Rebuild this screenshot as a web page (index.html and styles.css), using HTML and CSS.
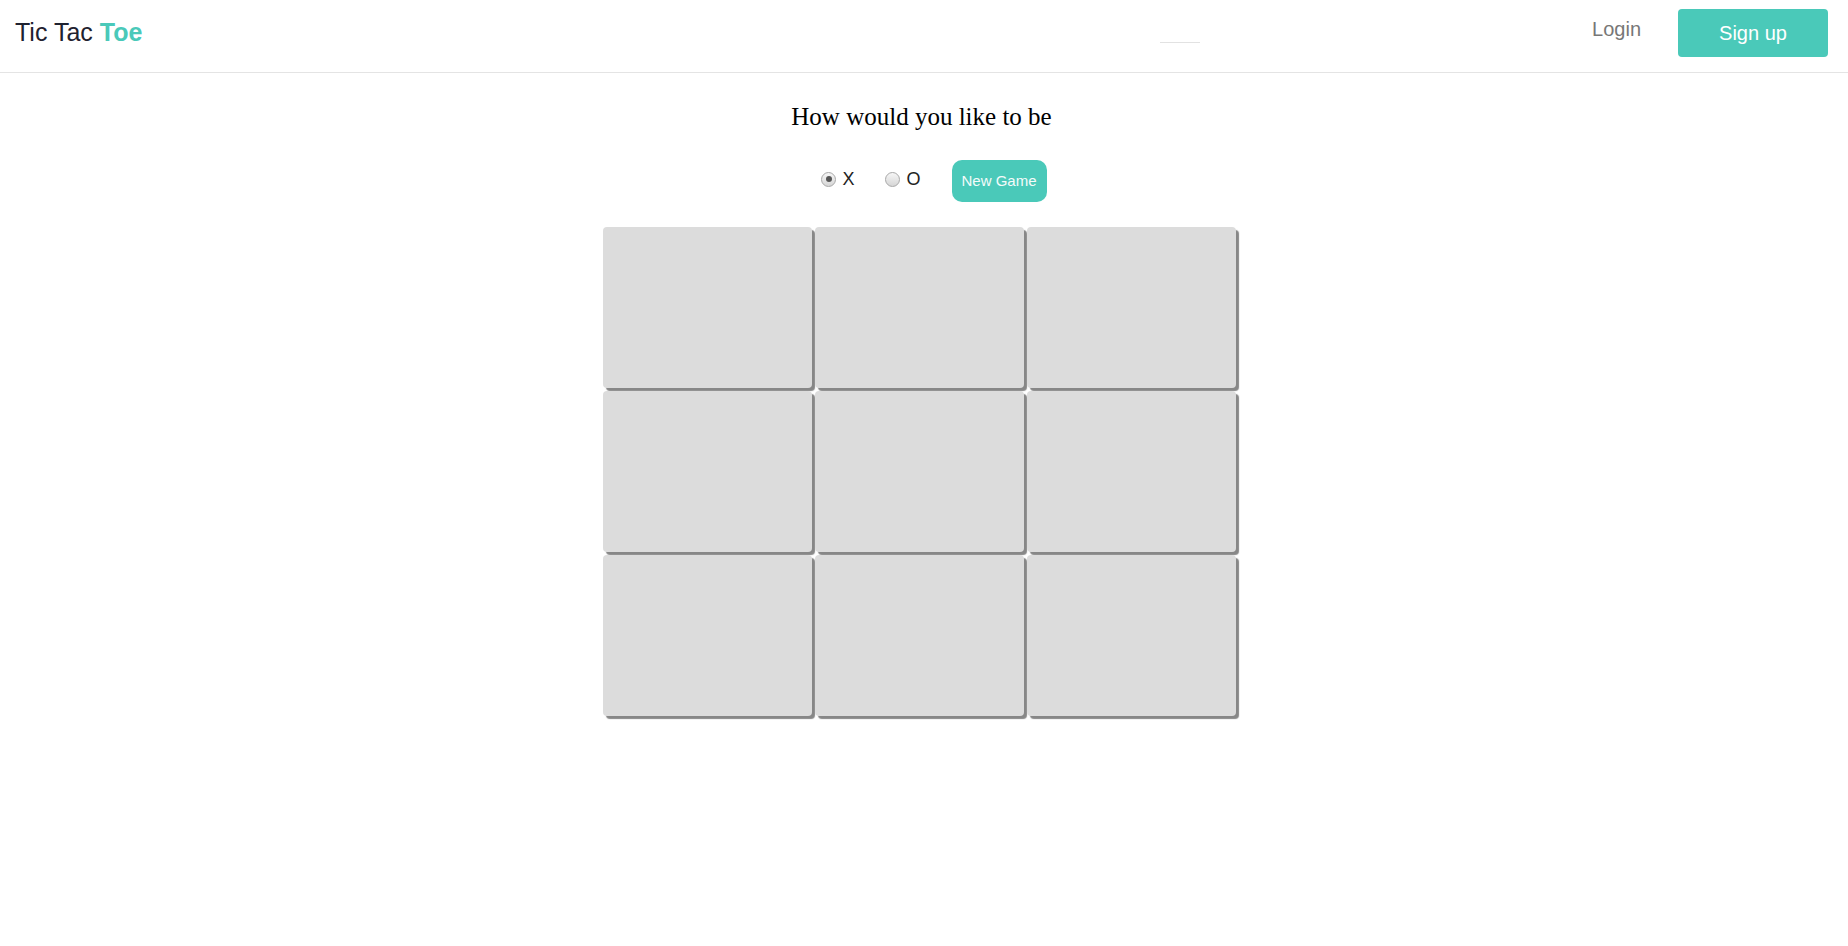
FILE: index.html
```html
<!DOCTYPE html>
<html lang="en">
<head>
<meta charset="utf-8">
<title>Tic Tac Toe</title>
<link rel="stylesheet" href="styles.css">
</head>
<body>
<header class="topbar">
  <div class="logo">Tic Tac <b class="logo-accent">Toe</b></div>
  <div class="nav-mid"><span class="nav-line"></span></div>
  <nav class="auth">
    <a class="login" href="#">Login</a>
    <a class="signup" href="#">Sign up</a>
  </nav>
</header>
<main class="game">
  <h2 class="prompt">How would you like to be</h2>
  <div class="controls">
    <label class="choice"><input class="radio" type="radio" name="side" checked><span>X</span></label>
    <label class="choice"><input class="radio" type="radio" name="side"><span>O</span></label>
    <button class="new-game" type="button">New Game</button>
  </div>
  <div class="board-wrap">
    <div class="board">
      <div class="cell"></div><div class="cell"></div><div class="cell"></div>
      <div class="cell"></div><div class="cell"></div><div class="cell"></div>
      <div class="cell"></div><div class="cell"></div><div class="cell"></div>
    </div>
  </div>
</main>
</body>
</html>
```
FILE: styles.css
```css
* { box-sizing: border-box; }
html, body { margin: 0; padding: 0; background: #fff; }
body { font-family: "Liberation Sans", Arial, sans-serif; color: #222; }

.topbar {
  height: 73px;
  border-bottom: 1px solid #e4e4e4;
  display: flex;
  align-items: center;
  padding: 0 20px 0 15px;
}
.logo {
  font-size: 25px;
  color: #1f2230;
  flex: 1 1 0;
  margin-top: -8px;
}
.logo-accent { color: #4ac9b9; font-weight: bold; }

.nav-mid { flex: 0 0 auto; display: flex; margin-left: 516px; }
.nav-line {
  display: block;
  width: 40px;
  height: 1px;
  background: #e2e2e2;
  margin-top: 12px;
}

.auth {
  flex: 1 1 0;
  display: flex;
  justify-content: flex-end;
  align-items: center;
}
.login {
  font-size: 20px;
  color: #777;
  text-decoration: none;
  margin-right: 37px;
  margin-top: -14px;
}
.signup {
  display: flex;
  align-items: center;
  justify-content: center;
  width: 150px;
  height: 48px;
  padding-top: 2px;
  background: #4ac9b9;
  color: #fff;
  font-size: 20px;
  text-decoration: none;
  border-radius: 4px;
  margin-top: -7px;
}

.game { display: flex; flex-direction: column; align-items: center; }
.prompt {
  font-family: "Liberation Serif", "Times New Roman", serif;
  font-weight: normal;
  font-size: 25px;
  line-height: 29px;
  margin: 29px 5px 0 0;
  color: #000;
}

.controls {
  display: flex;
  align-items: center;
  margin-top: 29px;
  padding-left: 20px;
}
.choice {
  display: flex;
  align-items: center;
  gap: 6px;
  font-size: 18px;
  color: #222;
  margin-right: 31px;
  margin-top: -4px;
}
.radio {
  -webkit-appearance: none;
  appearance: none;
  margin: 0;
  width: 15px;
  height: 15px;
  border-radius: 50%;
  border: 1px solid #a8a8a8;
  background: linear-gradient(#f6f6f6, #d6d6d6);
  position: relative;
}
.radio:checked::after {
  content: "";
  position: absolute;
  left: 3.5px;
  top: 3.5px;
  width: 6px;
  height: 6px;
  border-radius: 50%;
  background: #555;
}
.new-game {
  font-family: "Liberation Sans", Arial, sans-serif;
  font-size: 15px;
  line-height: 18px;
  height: 42px;
  padding: 0 10px;
  border: none;
  border-radius: 10px;
  background: #4ac9b9;
  color: #f4fbfa;
}

.board-wrap {
  display: flex;
  justify-content: center;
  margin-top: 25px;
  padding-right: 10px;
  padding-bottom: 20px;
  align-self: stretch;
}
.board {
  display: grid;
  grid-template-columns: repeat(3, 209px);
  grid-template-rows: repeat(3, 161px);
  gap: 3px;
}
.cell {
  background: #dcdcdc;
  border-radius: 4px;
  box-shadow: 3px 3px 1px #878787;
}
```
